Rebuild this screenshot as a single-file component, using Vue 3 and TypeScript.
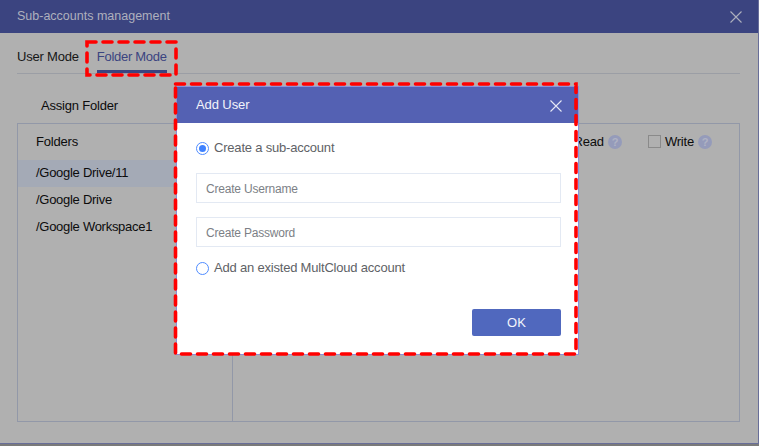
<script setup lang="ts">
const folders: string[] = ['/Google Drive/11', '/Google Drive', '/Google Workspace1']
</script>

<template>
  <div class="page">
    <div class="window">
      <header class="bar">
        <span>Sub-accounts management</span>
        <svg class="x" width="12" height="12" viewBox="0 0 12 12"><path d="M0.5 0.5L11.5 11.5M11.5 0.5L0.5 11.5" stroke="#aeb0bd" stroke-width="1.1" fill="none" /></svg>
      </header>
      <div class="body">
        <nav class="tabs">
          <span class="tab">User Mode</span>
          <span class="tab active">Folder Mode</span>
        </nav>
        <div class="assign">Assign Folder</div>
        <section class="panel">
          <aside class="side">
            <div class="side-head">Folders</div>
            <div v-for="(f, i) in folders" :key="f" class="row" :class="{ sel: i === 0 }">{{ f }}</div>
          </aside>
          <div class="perm">
            <span class="perm-item">Read <i class="help">?</i></span>
            <span class="perm-item write"><i class="check"></i>Write <i class="help">?</i></span>
          </div>
        </section>
      </div>
    </div>

    <div class="modal">
      <header class="m-head">
        <span>Add User</span>
        <svg width="12" height="12" viewBox="0 0 12 12"><path d="M0.5 0.5L11.5 11.5M11.5 0.5L0.5 11.5" stroke="#e6e8f5" stroke-width="1.1" fill="none" /></svg>
      </header>
      <div class="m-body">
        <label class="radio-line"><i class="radio on"></i>Create a sub-account</label>
        <div class="input">Create Username</div>
        <div class="input">Create Password</div>
        <label class="radio-line second"><i class="radio"></i>Add an existed MultCloud account</label>
        <div class="actions"><button class="ok" type="button">OK</button></div>
      </div>
    </div>

    <svg class="marks" width="759" height="446" viewBox="0 0 759 446">
      <rect x="87" y="42" width="89" height="33" />
      <rect x="175.5" y="84" width="400.5" height="270" />
    </svg>
  </div>
</template>

<style>
html, body { margin: 0; padding: 0; background: #6f6f6f; }
</style>

<style scoped>
.page {
  position: relative;
  width: 759px;
  height: 446px;
  overflow: hidden;
  font-family: "Liberation Sans", Arial, sans-serif;
  background: #7a7a7a;
}
.window {
  width: 758px;
  height: 443px;
  background: #b0b0b0;
  border-bottom: 1px solid #686e99;
  border-right: 1px solid #686e99;
  display: flex;
  flex-direction: column;
}
.bar {
  height: 33px;
  flex: none;
  background: #3b4480;
  color: #aeb0bd;
  font-size: 12.5px;
  padding: 0 16px 0 17px;
  display: flex;
  align-items: center;
  justify-content: space-between;
}
.bar span { position: relative; top: -1px; }
.body {
  flex: 1;
  padding: 0 18px 0 17px;
  display: flex;
  flex-direction: column;
}
.tabs {
  height: 41px;
  display: flex;
  gap: 18px;
  border-bottom: 1px solid #9b9ea5;
  flex: none;
  box-sizing: border-box;
}
.tab {
  font-size: 13px;
  letter-spacing: -0.2px;
  color: #161616;
  padding-top: 15px;
  box-sizing: border-box;
  height: 40px;
  line-height: 17px;
}
.tab.active {
  color: #3b4480;
  letter-spacing: -0.28px;
  border-bottom: 3px solid #3b4480;
}
.assign {
  height: 49px;
  flex: none;
  box-sizing: border-box;
  padding: 23px 0 0 24px;
  font-size: 13px;
  letter-spacing: -0.2px;
  line-height: 17px;
  color: #0c0c0c;
}
.panel {
  height: 299px;
  flex: none;
  box-sizing: border-box;
  border: 1px solid #9298a8;
  display: flex;
}
.side {
  width: 214px;
  flex: none;
  border-right: 1px solid #9298a8;
}
.side-head {
  height: 36px;
  box-sizing: border-box;
  padding: 9px 0 0 18px;
  font-size: 13px;
  letter-spacing: -0.2px;
  line-height: 17px;
  color: #0c0c0c;
}
.row {
  height: 27px;
  line-height: 25px;
  padding-left: 18px;
  font-size: 13px;
  letter-spacing: -0.28px;
  color: #0c0c0c;
}
.row.sel { background: #a4aab6; }
.perm {
  flex: 1;
  display: flex;
  justify-content: flex-end;
  align-items: flex-start;
  gap: 26px;
  padding: 9px 27px 0 0;
  font-size: 13px;
  letter-spacing: -0.2px;
  line-height: 17px;
  color: #0c0c0c;
}
.perm-item { display: flex; align-items: center; gap: 4px; }
.help {
  width: 14px;
  height: 14px;
  border-radius: 50%;
  background: #959bba;
  color: #b0b3c4;
  font-size: 11px;
  font-weight: 700;
  font-style: normal;
  line-height: 14px;
  text-align: center;
}
.check {
  width: 11px;
  height: 11px;
  border: 1px solid #8a8a8a;
}
.modal {
  position: absolute;
  left: 176px;
  top: 86px;
  width: 403px;
  height: 269px;
  background: #fff;
  box-sizing: border-box;
  border: 1px solid #8a92dc;
  display: flex;
  flex-direction: column;
}
.m-head {
  height: 36px;
  flex: none;
  background: #5461b3;
  color: #f2f3fa;
  font-size: 13px;
  letter-spacing: -0.1px;
  padding: 0 16px 1px 19px;
  box-sizing: border-box;
  display: flex;
  align-items: center;
  justify-content: space-between;
}
.m-head svg { position: relative; top: 1px; }
.m-body {
  flex: 1;
  padding: 15px 17px 0 19px;
  display: flex;
  flex-direction: column;
  color: #606266;
  font-size: 13px;
  letter-spacing: -0.2px;
}
.radio-line {
  display: flex;
  align-items: center;
  gap: 5px;
  height: 20px;
  line-height: 20px;
}
.radio {
  width: 11px;
  height: 11px;
  border-radius: 50%;
  border: 1px solid #4f8cff;
  background: #fff;
  position: relative;
  flex: none;
}
.radio.on::after {
  content: "";
  position: absolute;
  left: 2px;
  top: 2px;
  width: 7px;
  height: 7px;
  border-radius: 50%;
  background: #3f82ff;
}
.input {
  margin-top: 15px;
  height: 30px;
  line-height: 30px;
  box-sizing: border-box;
  border: 1px solid #e3e9f3;
  padding-left: 9px;
  color: #7c7f86;
  font-size: 12px;
  letter-spacing: -0.2px;
}
.input + .input { margin-top: 14px; }
.second { margin-top: 11px; }
.actions {
  display: flex;
  justify-content: flex-end;
  margin-top: 31px;
}
.ok {
  width: 89px;
  height: 27px;
  border: none;
  border-radius: 2px;
  background: #5068be;
  color: #f2f4fb;
  font: 13px "Liberation Sans", Arial, sans-serif;
  padding: 0;
}
.marks {
  position: absolute;
  left: 0;
  top: 0;
  pointer-events: none;
}
.marks rect {
  fill: none;
  stroke: #ff0000;
  stroke-width: 3.6;
  stroke-dasharray: 9 7;
  stroke-linecap: round;
}
</style>
